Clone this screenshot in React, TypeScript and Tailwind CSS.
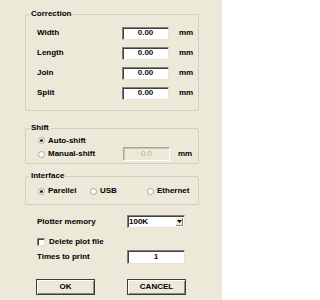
import React from 'react'

const sunken =
  'border border-t-[#7f7f7f] border-l-[#7f7f7f] border-b-[#e4e2d6] border-r-[#e4e2d6] shadow-[inset_1px_1px_0_#404040]'

const sunkenDisabled =
  'border border-t-[#a9a796] border-l-[#a9a796] border-b-[#ffffff] border-r-[#ffffff] shadow-[inset_1px_1px_0_#c9c6b6]'

function Radio({ checked }: { checked?: boolean }) {
  return (
    <span className="flex h-[7px] w-[7px] shrink-0 items-center justify-center rounded-full border border-[#a7a69a] bg-white">
      {checked && <span className="h-[3px] w-[3px] rounded-full bg-[#222]" />}
    </span>
  )
}

function Field({ value, disabled, className }: { value: string; disabled?: boolean; className?: string }) {
  return (
    <div
      className={`${disabled ? sunkenDisabled : sunken} ${className ?? ''} flex items-center justify-center ${
        disabled ? 'bg-[#ece9d8] font-normal text-[#b5b2a3]' : 'bg-white text-[#111]'
      }`}
    >
      {value}
    </div>
  )
}

function Group({ title, children, className }: { title: string; children: React.ReactNode; className?: string }) {
  return (
    <fieldset className={`ml-[25px] w-[174px] rounded-[2px] border border-[#d0d0bf] ${className ?? ''}`}>
      <legend className="ml-[4px] px-[1px] leading-[10px]">{title}</legend>
      {children}
    </fieldset>
  )
}

function Button({ label }: { label: string }) {
  return (
    <button className="flex h-[16px] w-[59px] items-center justify-center border border-[#3c3c3c] bg-[#ece9d8] shadow-[inset_1px_1px_0_#ffffff,inset_-1px_-1px_0_#8a8a80]">
      {label}
    </button>
  )
}

const corrections = ['Width', 'Length', 'Join', 'Split']

export default function App() {
  return (
    <div className="h-[300px] w-[222px] overflow-hidden bg-[#ece9d8] pt-[9px] text-[8px] font-bold leading-[10px] text-black [font-family:'Liberation_Sans',Arial,sans-serif]">
      <Group title="Correction" className="pt-[4px] pb-[7px]">
        {corrections.map((name) => (
          <div key={name} className="flex h-[20px] items-center pl-[11px]">
            <span className="w-[85px]">{name}</span>
            <Field value="0.00" className="h-[13px] w-[47px]" />
            <span className="ml-[10px]">mm</span>
          </div>
        ))}
      </Group>

      <Group title="Shift" className="mt-[12px] pt-[1px] pb-[2px]">
        <div className="flex h-[13px] items-center pl-[12px]">
          <Radio checked />
          <span className="ml-[3px]">Auto-shift</span>
        </div>
        <div className="flex h-[14px] items-center pl-[12px]">
          <Radio />
          <span className="ml-[3px] w-[75px]">Manual-shift</span>
          <Field value="0.0" disabled className="h-[14px] w-[47px]" />
          <span className="ml-[8px]">mm</span>
        </div>
      </Group>

      <Group title="Interface" className="mt-[7px] pb-[3px]">
        <div className="flex h-[20px] items-center pl-[12px]">
          <div className="flex w-[52px] items-center">
            <Radio checked />
            <span className="ml-[3px]">Parellel</span>
          </div>
          <div className="flex w-[57px] items-center">
            <Radio />
            <span className="ml-[3px]">USB</span>
          </div>
          <div className="flex items-center">
            <Radio />
            <span className="ml-[3px]">Ethernet</span>
          </div>
        </div>
      </Group>

      <div className="mt-[10px] flex h-[13px] items-center pl-[37px]">
        <span className="w-[90px]">Plotter memory</span>
        <div className={`${sunken} flex h-[13px] w-[58px] items-center bg-white pl-[1px]`}>
          <span className="flex-1">100K</span>
          <span className="mr-[1px] flex h-[9px] w-[8px] items-center justify-center bg-[#ece9d8] shadow-[inset_1px_1px_0_#ffffff,inset_-1px_-1px_0_#808080]">
            <svg width="5" height="3" viewBox="0 0 5 3">
              <path d="M0 0h5L2.5 3z" fill="#000" />
            </svg>
          </span>
        </div>
      </div>

      <div className="mt-[9px] flex h-[10px] items-center pl-[37px]">
        <span className={`${sunken} h-[8px] w-[8px] bg-white`} />
        <span className="ml-[4px]">Delete plot file</span>
      </div>

      <div className="mt-[3px] flex h-[14px] items-center pl-[37px]">
        <span className="w-[90px]">Times to print</span>
        <Field value="1" className="h-[14px] w-[58px]" />
      </div>

      <div className="mt-[15px] flex pl-[36px]">
        <Button label="OK" />
        <div className="ml-[32px]">
          <Button label="CANCEL" />
        </div>
      </div>
    </div>
  )
}
